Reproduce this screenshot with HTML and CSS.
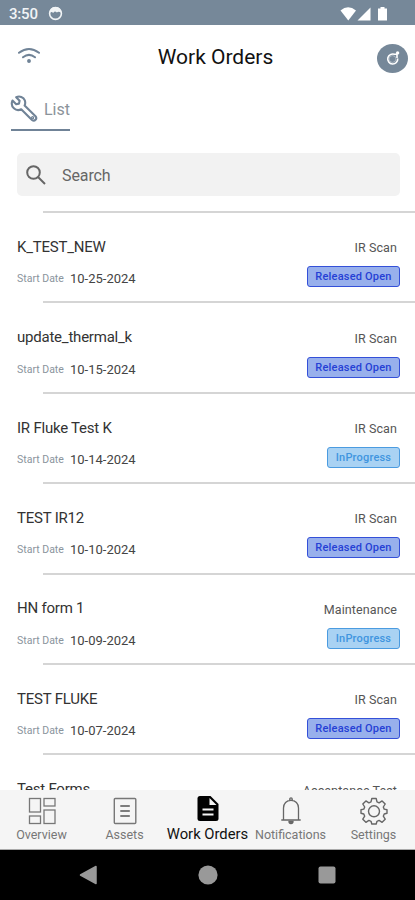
FILE: index.html
```html
<!DOCTYPE html>
<html lang="en">
<head>
<meta charset="utf-8">
<title>Work Orders</title>
<link rel="stylesheet" href="styles.css">
</head>
<body>
<div class="phone">
  <div class="status">
    <span class="clock">3:50</span>
    <svg class="face" viewBox="0 0 16 16" width="15" height="15"><circle cx="8" cy="8" r="6.3" fill="none" stroke="#f1f4f6" stroke-width="1.7"/><path d="M2 7Q2 1 8 1t6 6Q11 5 9.500 7 7 4.500 5.500 7.500 4 5.500 2 7z" fill="#f1f4f6"/></svg>
    <svg class="signals" viewBox="0 0 48 16" width="48" height="16"><path d="M.5 4.500Q8-2 16 4.500L8.300 14.500z" fill="#fff"/><path d="M30.500 1.500v13H17.500z" fill="#fff"/><path d="M38 2.500h2.500V1h4v1.500H47v12h-9z" fill="#fff"/></svg>
  </div>
  <header class="header">
    <svg viewBox="0 0 24 18" width="24" height="18" fill="none" stroke="#708397" stroke-width="2" stroke-linecap="round"><path d="M2 5.800Q12-1.800 22 5.800M6 10.300Q12 5.500 18 10.300"/><circle cx="12" cy="14" r="1.300" fill="#708397" stroke-width="1.200"/></svg>
    <h1 class="title">Work Orders</h1>
    <div class="refresh">
      <svg viewBox="0 0 16 16" width="16" height="16" fill="none" stroke="#fff" stroke-width="1.600"><circle cx="7.500" cy="9" r="3.400" stroke-width=".7" opacity=".5"/><path d="M9.500 4.300A5 5 0 1 0 12.700 8.500M8.500 4.200H12V8"/><circle cx="12.600" cy="2.900" r="1.700" fill="#fff" stroke="none"/></svg>
    </div>
  </header>
  <div class="tabs">
    <div class="tab">
      <svg viewBox="0 0 28 28" width="28" height="28" fill="none" stroke="#708397" stroke-width="2.100" stroke-linejoin="round"><path d="M2.500 5.500L6.200 9.200 9 8.600 9.600 5.800 6.200 2.200C9.500.6 13.500 2 14.800 5.300 15.500 7.300 15.300 9 14.600 10.600L25.500 21.300C27.600 23.800 24.600 27 22 25L11.200 14.300C8.800 15.500 6 15.300 3.900 13.300 1.700 11.200 1.300 8.200 2.500 5.500z"/><circle cx="22.600" cy="22.700" r=".6"/></svg>
      <span>List</span>
    </div>
  </div>
  <div class="search">
    <svg viewBox="0 0 22 22" width="22" height="22" fill="none" stroke="#666" stroke-width="2"><circle cx="8.500" cy="8.500" r="6.300"/><path d="M13 13l7 7"/></svg>
    <span>Search</span>
  </div>
  <main class="list">
    <article class="row"><div class="line"><h2>K_TEST_NEW</h2><span class="kind">IR Scan</span></div><div class="line meta"><span class="label">Start Date</span><time>10-25-2024</time><span class="badge open">Released Open</span></div></article>
    <article class="row"><div class="line"><h2>update_thermal_k</h2><span class="kind">IR Scan</span></div><div class="line meta"><span class="label">Start Date</span><time>10-15-2024</time><span class="badge open">Released Open</span></div></article>
    <article class="row"><div class="line"><h2>IR Fluke Test K</h2><span class="kind">IR Scan</span></div><div class="line meta"><span class="label">Start Date</span><time>10-14-2024</time><span class="badge progress">InProgress</span></div></article>
    <article class="row"><div class="line"><h2>TEST IR12</h2><span class="kind">IR Scan</span></div><div class="line meta"><span class="label">Start Date</span><time>10-10-2024</time><span class="badge open">Released Open</span></div></article>
    <article class="row"><div class="line"><h2>HN form 1</h2><span class="kind">Maintenance</span></div><div class="line meta"><span class="label">Start Date</span><time>10-09-2024</time><span class="badge progress">InProgress</span></div></article>
    <article class="row"><div class="line"><h2>TEST FLUKE</h2><span class="kind">IR Scan</span></div><div class="line meta"><span class="label">Start Date</span><time>10-07-2024</time><span class="badge open">Released Open</span></div></article>
    <article class="row"><div class="line"><h2>Test Forms</h2><span class="kind">Acceptance Test</span></div></article>
  </main>
  <nav class="nav">
    <div class="item"><svg viewBox="0 0 28 28" width="28" height="28" fill="none" stroke="#777" stroke-width="1.300"><rect x="1.500" y="1.500" width="11" height="13.500"/><rect x="16" y="1.500" width="11" height="7.500"/><rect x="1.500" y="19" width="11" height="7.500"/><rect x="16" y="13" width="11" height="13.500"/></svg><span>Overview</span></div>
    <div class="item"><svg viewBox="0 0 28 28" width="28" height="28" fill="none" stroke="#777" stroke-width="1.400"><rect x="3.300" y="1.500" width="21.500" height="25" rx="1"/><path d="M9.300 9h9.500M9.300 14h9.500M9.300 19h9.500" stroke="#555"/></svg><span>Assets</span></div>
    <div class="item active"><svg viewBox="0 0 28 28" width="28" height="28"><path d="M6 0h10.500l8 8v14.500a2.500 2.500 0 0 1-2.500 2.500H6a2.500 2.500 0 0 1-2.500-2.500v-20A2.500 2.500 0 0 1 6 0z" fill="#000"/><path d="M15.500 2v7h7z" fill="#f5f5f5"/><path d="M8.500 13.500h11M8.500 18.500h11" stroke="#f5f5f5" stroke-width="2.200"/></svg><span>Work Orders</span></div>
    <div class="item"><svg viewBox="0 0 28 28" width="28" height="28" fill="none" stroke="#666" stroke-width="1.300"><path d="M4.300 23h19.400M6.500 23V11C6.500 6.500 9.500 3.300 14 3.300s7.500 3.200 7.500 7.700v12M12.800 3.300V2a1.200 1.200 0 0 1 2.400 0v1.300"/><path d="M12 24.500a2 2 0 0 0 4 0z" fill="#777"/></svg><span>Notifications</span></div>
    <div class="item"><svg viewBox="0 0 28 28" width="28" height="28" fill="none" stroke="#666" stroke-width="1.400" stroke-linejoin="round"><path d="M11.800 1.500h4.400l.8 3.400 2.100.9 3-1.900 3.100 3.100-1.900 3 .9 2.100 2.800.6v3.600l-2.800.7-.9 2.200 1.900 3-3.100 3.100-3-1.900-2.100.9-.8 2.700h-4.400l-.8-2.700-2.100-.9-3 1.900-3.100-3.100 1.900-3-.9-2.200-2.800-.7v-3.600l2.800-.6.9-2.100-1.900-3 3.100-3.100 3 1.900 2.100-.9z"/><circle cx="14" cy="14.300" r="5.500"/></svg><span>Settings</span></div>
  </nav>
  <div class="system">
    <svg viewBox="0 0 20 20" width="20" height="20"><path d="M17 1.500v17L1.500 10z" fill="#999" stroke="#999" stroke-width="1.500" stroke-linejoin="round"/></svg>
    <svg viewBox="0 0 20 20" width="20" height="20"><circle cx="10" cy="10" r="9.600" fill="#999"/></svg>
    <svg viewBox="0 0 20 20" width="20" height="20"><rect x="1.500" y="1.500" width="17" height="17" rx="2" fill="#999"/></svg>
  </div>
</div>
</body>
</html>
```
FILE: styles.css
```css
* { box-sizing: border-box; }
body { margin: 0; font-family: Roboto, sans-serif; background: #fff; }
svg { display: block; flex: none; }
.phone { width: 415px; height: 900px; display: flex; flex-direction: column; overflow: hidden; }
.status { height: 25px; flex: none; background: #768899; display: flex; align-items: center; padding: 2px 27px 0 9px; }
.clock { color: #f1f4f6; font-size: 15px; font-weight: 500; letter-spacing: -0.2px; width: 39px; }
.signals { margin-left: auto; }
.header { height: 66px; flex: none; display: flex; align-items: center; justify-content: space-between; padding: 0 7px 0 17px; }
.title { margin: 0 0 3px 13px; font-size: 21px; font-weight: 400; color: #111; }
.header > svg { margin-bottom: 5px; }
.refresh { width: 31px; height: 29px; border-radius: 50%; background: #768899; display: grid; place-items: center; }
.tabs { height: 62px; flex: none; padding-left: 11px; }
.tab { width: 59px; height: 40px; display: flex; align-items: center; gap: 6px; border-bottom: 2px solid #708397; color: #8b939a; font-size: 16px; padding-bottom: 2px; }
.tab svg { margin-left: -1px; }
.search { height: 43px; flex: none; margin: 0 15px 15px 17px; border-radius: 5px; background: #f2f2f2; display: flex; align-items: center; gap: 15px; padding: 1px 0 0 8px; color: #666; font-size: 16px; letter-spacing: -0.1px; }
.list { flex: 1; min-height: 0; overflow: hidden; }
.row { height: 90.4px; padding: 23.8px 15px 0 17px; background: linear-gradient(#d5d5d5, #d5d5d5) 43px 0 / 100% 2px no-repeat; }
.line { height: 24px; display: flex; align-items: center; justify-content: space-between; }
.line h2 { margin: 0; font-size: 15px; font-weight: 400; color: #333; letter-spacing: -0.22px; }
.kind { font-size: 12.500px; color: #555; margin: 2px 3px 0 0; letter-spacing: 0.1px; }
.meta { height: 24px; margin-top: 8px; justify-content: flex-start; }
.label { font-size: 10.500px; color: #8a949d; width: 53px; white-space: nowrap; }
.meta time { font-size: 13px; color: #444; }
.badge { height: 21px; margin: 0 0 4px auto; border: 1px solid; border-radius: 3px; display: grid; place-items: center; font-size: 11px; font-weight: 500; letter-spacing: 0.2px; }
.open { width: 93px; background: #98b0ec; border-color: #3450d8; color: #2540d5; }
.progress { width: 73px; background: #a9d2f3; border-color: #4b9be0; color: #4095df; }
.nav { height: 60px; flex: none; background: #f5f5f5; border-bottom: 1px solid #aaa; display: grid; grid-template-columns: repeat(5, 83px); padding-top: 7px; }
.item { display: flex; flex-direction: column; align-items: center; color: #777; font-size: 12.500px; line-height: 18px; white-space: nowrap; }
.item > span { margin-top: 1px; }
.item.active { color: #111; font-size: 14.800px; }
.item.active svg { margin-top: -1px; }
.system { height: 50px; flex: none; background: #000; display: flex; align-items: center; justify-content: center; gap: 99px; }
```
